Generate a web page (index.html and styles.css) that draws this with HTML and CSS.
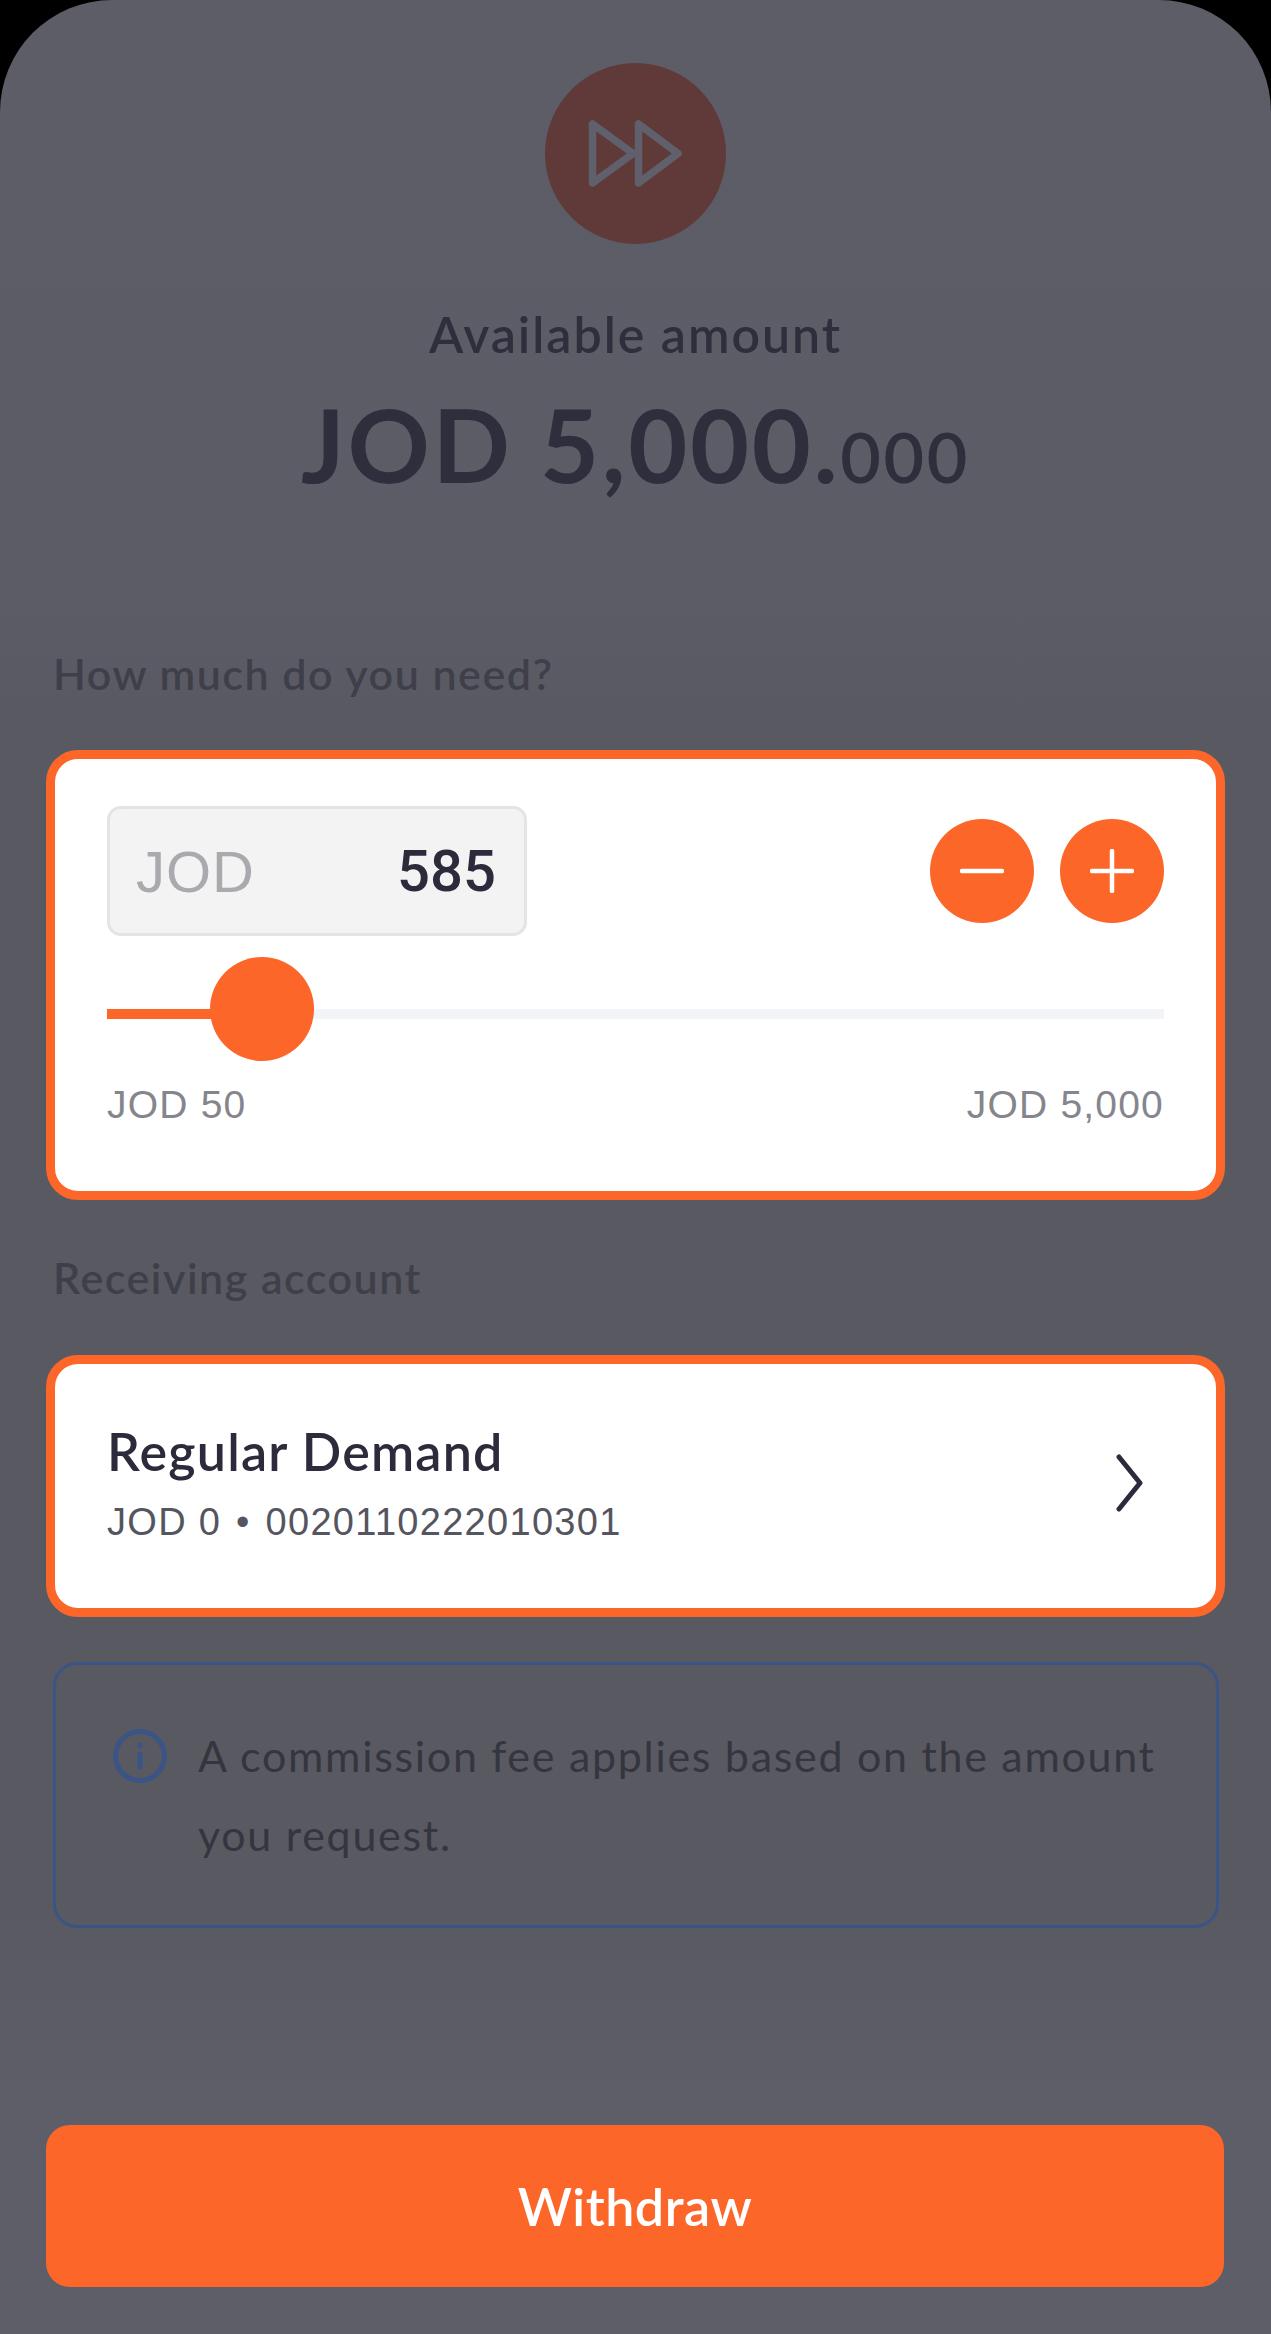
FILE: index.html
```html
<!DOCTYPE html>
<html lang="en">
<head>
<meta charset="UTF-8" />
<title>Withdraw</title>
<link rel="stylesheet" href="styles.css">
</head>
<body>
<div class="screen">
  <header class="hero">
    <div class="hero-icon">
      <svg width="181" height="181" viewBox="0 0 181 181" fill="none" stroke="#5f606c" stroke-width="7.5" stroke-linejoin="round">
        <path d="M47.5 61V120L88 90.5Z" />
        <path d="M93.5 61V120L133 90.5Z" />
      </svg>
    </div>
    <p class="hero-label">Available amount</p>
    <p class="hero-amount">JOD 5,000.<span class="hero-decimals">000</span></p>
  </header>

  <main class="content">
    <h2 class="section-label">How much do you need?</h2>
    <section class="card amount-card">
      <div class="amount-row">
        <div class="amount-input">
          <span class="amount-currency">JOD</span>
          <span class="amount-value">585</span>
        </div>
        <div class="stepper">
          <button class="step-btn" aria-label="Decrease">
            <svg width="44" height="44" viewBox="0 0 44 44" stroke="#fff" stroke-width="4.5" stroke-linecap="round"><path d="M2 22H42" /></svg>
          </button>
          <button class="step-btn" aria-label="Increase">
            <svg width="44" height="44" viewBox="0 0 44 44" stroke="#fff" stroke-width="4.5" stroke-linecap="round"><path d="M2 22H42M22 2V42" /></svg>
          </button>
        </div>
      </div>
      <div class="slider">
        <div class="slider-fill" style="width: 14.7%"><span class="slider-thumb"></span></div>
      </div>
      <div class="slider-limits">
        <span>JOD 50</span>
        <span>JOD 5,000</span>
      </div>
    </section>

    <h2 class="section-label section-label-account">Receiving account</h2>
    <section class="card account-card">
      <div>
        <div class="account-name">Regular Demand</div>
        <div class="account-meta">JOD 0 <span class="account-dot">•</span> 0020110222010301</div>
      </div>
      <svg class="chevron" width="27" height="58" viewBox="0 0 27 58" fill="none" stroke="#2b2b3c" stroke-width="5" stroke-linecap="round" stroke-linejoin="round"><path d="M3 3L24 29L3 55" /></svg>
    </section>

    <section class="notice">
      <svg class="notice-icon" width="54" height="54" viewBox="0 0 54 54" fill="none" stroke="#3b5486" stroke-width="5" stroke-linecap="round">
        <circle cx="27" cy="27" r="24.5" />
        <path d="M27 25V38" />
        <path d="M27 16V16.5" />
      </svg>
      <p class="notice-text">A commission fee applies based on the amount you request.</p>
    </section>
  </main>

  <footer class="actions">
    <button class="primary-btn">Withdraw</button>
  </footer>
</div>
</body>
</html>
```

FILE: styles.css
```css
* {
  box-sizing: border-box;
}
html, body {
  margin: 0;
  padding: 0;
  background: #000;
}
body {
  font-family: "Lato", "Liberation Sans", sans-serif;
  color: #2e2e3c;
}
.screen {
  width: 1271px;
  height: 2334px;
  background: linear-gradient(#5d5d68 0, #5c5c67 600px, #595962 720px, #595962 1900px, #5e5e69 2100px);
  border-radius: 112px 112px 0 0;
  display: flex;
  flex-direction: column;
  overflow: hidden;
}
.hero {
  height: 597px;
  padding-top: 63px;
  display: flex;
  flex-direction: column;
  align-items: center;
}
.hero-icon {
  width: 181px;
  height: 181px;
  border-radius: 50%;
  background: #5f3a38;
}
.hero-icon svg {
  display: block;
}
.hero-label {
  margin: 60px 0 0;
  font-size: 50px;
  line-height: 60px;
  font-weight: 600;
  letter-spacing: 2px;
}
.hero-amount {
  margin: 20px 0 0;
  font-size: 102px;
  line-height: 120px;
  font-weight: 700;
  letter-spacing: 2.6px;
}
.hero-decimals {
  font-size: 70px;
  font-weight: 600;
}
.content {
  flex: 1;
  padding: 0 46px;
}
.section-label {
  margin: 52px 0 0 7px;
  font-size: 43px;
  line-height: 50px;
  font-weight: 600;
  color: #3f3f49;
  letter-spacing: 1.5px;
}
.section-label-account {
  margin-top: 53px;
}
.card {
  background: #fff;
  border: 9px solid #fd6629;
  border-radius: 32px;
}
.amount-card {
  margin-top: 51px;
  height: 450px;
  padding: 47px 52px 0;
}
.amount-row {
  display: flex;
  justify-content: space-between;
  align-items: center;
}
.amount-input {
  width: 420px;
  height: 130px;
  background: #f3f3f4;
  border: 3px solid #e4e4e6;
  border-radius: 14px;
  padding: 0 28px 0 26px;
  display: flex;
  justify-content: space-between;
  align-items: center;
  font-family: "Liberation Sans", sans-serif;
  font-size: 58px;
}
.amount-currency {
  color: #a9a9ae;
  letter-spacing: 1px;
}
.amount-value {
  color: #2b2b3c;
  font-family: "Roboto", sans-serif;
  font-weight: 500;
}
.stepper {
  display: flex;
  gap: 26px;
}
.step-btn {
  width: 104px;
  height: 104px;
  border: 0;
  padding: 0;
  border-radius: 50%;
  background: #fd6629;
  display: flex;
  align-items: center;
  justify-content: center;
}
.slider {
  margin-top: 73px;
  height: 10px;
  background: #f3f4f7;
}
.slider-fill {
  position: relative;
  height: 100%;
  background: #fd6629;
}
.slider-thumb {
  position: absolute;
  right: -52px;
  top: -52px;
  width: 104px;
  height: 104px;
  border-radius: 50%;
  background: #fd6629;
}
.slider-limits {
  margin-top: 63px;
  display: flex;
  justify-content: space-between;
  font-family: "Liberation Sans", sans-serif;
  font-size: 39px;
  line-height: 46px;
  letter-spacing: 1.2px;
  color: #85858d;
}
.account-card {
  margin-top: 52px;
  height: 262px;
  padding: 0 73px 7px 52px;
  display: flex;
  justify-content: space-between;
  align-items: center;
}
.account-name {
  font-size: 52px;
  line-height: 58px;
  font-weight: 600;
  letter-spacing: 1.2px;
  color: #2b2b3c;
}
.account-meta {
  margin-top: 20px;
  font-family: "Liberation Sans", sans-serif;
  font-size: 38px;
  line-height: 44px;
  letter-spacing: 1.3px;
  color: #55555f;
}
.account-dot {
  margin: 0 3px;
}
.notice {
  margin: 45px 6px 0 7px;
  height: 266px;
  padding: 64px 40px 0 57px;
  border: 3px solid #3b5486;
  border-radius: 24px;
  display: flex;
  align-items: flex-start;
  gap: 31px;
}
.notice-icon {
  flex-shrink: 0;
}
.notice-text {
  margin: -13px 0 0;
  font-size: 43px;
  line-height: 79px;
  color: #35353f;
  letter-spacing: 1.7px;
}
.actions {
  padding: 0 47px 47px 46px;
}
.primary-btn {
  display: block;
  width: 100%;
  height: 162px;
  border: 0;
  border-radius: 24px;
  background: #fd6629;
  color: #fff;
  font-family: "Lato", sans-serif;
  font-size: 52px;
  font-weight: 600;
  letter-spacing: 0.5px;
}
```
